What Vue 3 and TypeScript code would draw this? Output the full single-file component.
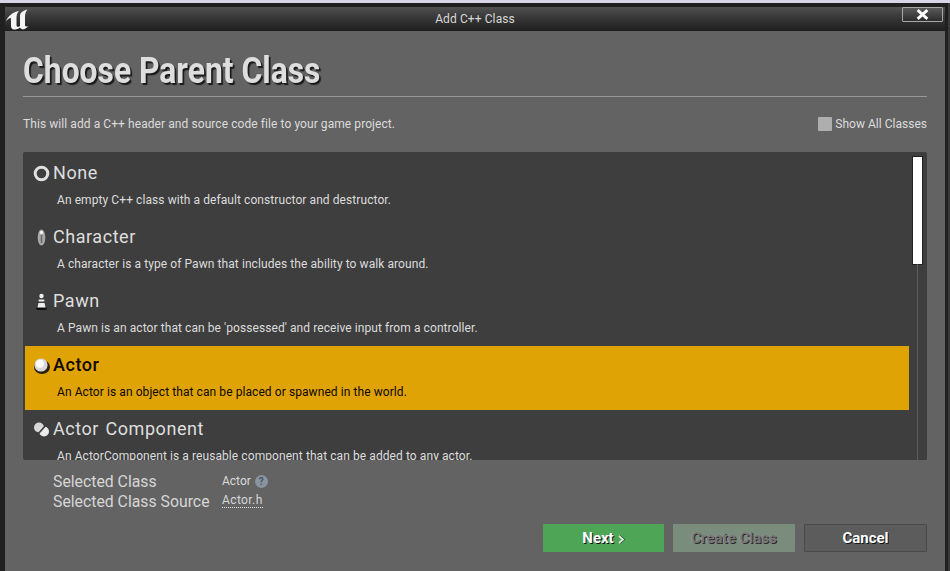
<script setup lang="ts">
interface ClassItem {
  name: string
  desc: string
  icon: string
  selected?: boolean
}

const items: ClassItem[] = [
  { name: 'None', desc: 'An empty C++ class with a default constructor and destructor.', icon: 'none' },
  { name: 'Character', desc: 'A character is a type of Pawn that includes the ability to walk around.', icon: 'character' },
  { name: 'Pawn', desc: "A Pawn is an actor that can be 'possessed' and receive input from a controller.", icon: 'pawn' },
  { name: 'Actor', desc: 'An Actor is an object that can be placed or spawned in the world.', icon: 'actor', selected: true },
  { name: 'Actor Component', desc: 'An ActorComponent is a reusable component that can be added to any actor.', icon: 'component' },
]
</script>

<template>
  <div class="window">
    <header class="titlebar">
      <svg class="logo" viewBox="0 0 26 24" width="26" height="24">
        <path fill="#f4f4f4" d="M1 14 C3 9 8 5 14 4 C12 6 11.500 8 11.500 11 L11.500 18 C11.500 20 13 20.500 15 19 L15 9 C15 6 17 4 22.500 2.500 C20.500 5 20 7 20 10 L20 18 C20 19.500 21.500 20 23.500 19 C22 21 20 22 18 22.500 C16.500 22 15.500 21.500 15 20.500 C13.500 22 11 22.500 9 22.500 C7 22.500 6 21 6 18.500 L6 12 C6 10 4 11 1 14 Z"/>
      </svg>
      <span class="window-title">Add C++ Class</span>
      <button class="close" type="button" aria-label="Close">
        <svg viewBox="0 0 12 10" width="13" height="11">
          <path d="M1.500 1 L10.500 9 M10.500 1 L1.500 9" stroke="#fff" stroke-width="2.600" fill="none"/>
        </svg>
      </button>
    </header>

    <main class="body">
      <div class="heading-wrap">
        <h1 class="heading">Choose Parent Class</h1>
      </div>
      <div class="rule"></div>

      <div class="intro">
        <span>This will add a C++ header and source code file to your game project.</span>
        <label class="show-all"><span class="check"></span>Show All Classes</label>
      </div>

      <section class="list">
        <div class="rows">
          <article v-for="item in items" :key="item.name" class="row" :class="{ selected: item.selected }">
            <div class="row-head">
              <span class="icon">
                <svg v-if="item.icon === 'none'" viewBox="0 0 17 17" width="17" height="17">
                  <circle cx="8.500" cy="8.500" r="6.300" fill="none" stroke="#e0e0e0" stroke-width="3"/>
                </svg>
                <svg v-else-if="item.icon === 'character'" viewBox="0 0 17 17" width="17" height="17">
                  <ellipse cx="8.500" cy="8.500" rx="3.800" ry="8" fill="#a8a8a8"/>
                  <circle cx="8.500" cy="3.500" r="1.700" fill="#f0f0f0"/>
                  <rect x="7.700" y="6" width="1.600" height="8" fill="#6a6a6a"/>
                </svg>
                <svg v-else-if="item.icon === 'pawn'" viewBox="0 0 17 17" width="17" height="17">
                  <ellipse cx="8.500" cy="15.500" rx="5.500" ry="1.500" fill="#0c0c0c"/>
                  <circle cx="8.500" cy="3" r="2.200" fill="#eee"/>
                  <rect x="5.500" y="6.500" width="6" height="2" rx="1" fill="#eee"/>
                  <path d="M4.500 14.500 L5.500 10 L11.500 10 L12.500 14.500 Z" fill="#eee"/>
                </svg>
                <svg v-else-if="item.icon === 'actor'" viewBox="0 0 17 17" width="17" height="17">
                  <ellipse cx="9" cy="10" rx="8" ry="7" fill="#2c2208"/>
                  <circle cx="8" cy="8" r="6.600" fill="#d8d8d8"/>
                  <circle cx="7" cy="6.800" r="4" fill="#fff"/>
                </svg>
                <svg v-else viewBox="0 0 17 17" width="17" height="17">
                  <circle cx="6" cy="6.500" r="5" fill="#d6d6d6"/>
                  <circle cx="11" cy="10.500" r="5" fill="#ececec"/>
                  <path d="M5 13 L13 4" stroke="#3e3e3e" stroke-width="1.800"/>
                </svg>
              </span>
              <h2 class="row-name">{{ item.name }}</h2>
            </div>
            <p class="row-desc">{{ item.desc }}</p>
          </article>
        </div>
        <div class="scroll"><div class="thumb"></div></div>
      </section>

      <dl class="details">
        <div class="detail">
          <dt>Selected Class</dt>
          <dd>Actor <span class="help">?</span></dd>
        </div>
        <div class="detail">
          <dt>Selected Class Source</dt>
          <dd><span class="link">Actor.h</span></dd>
        </div>
      </dl>

      <footer class="actions">
        <button class="btn next" type="button">Next<svg class="chev" viewBox="0 0 8 9" width="8" height="9"><path d="M2 1 L6 4.500 L2 8" fill="none" stroke="#d8e8d8" stroke-width="1.800"/></svg></button>
        <button class="btn create" type="button">Create Class</button>
        <button class="btn cancel" type="button">Cancel</button>
      </footer>
    </main>
  </div>
</template>

<style>
html, body { margin: 0; padding: 0; background: #d6d6e6; overflow: hidden; }
</style>

<style scoped>
* { box-sizing: border-box; }
.window {
  width: 948px;
  height: 568px;
  margin-top: 3px;
  background: #202020;
  border: solid #202020;
  border-width: 4px 3px 0 4px;
  box-shadow: 2px 0 0 #3a3a3a;
  display: flex;
  flex-direction: column;
  font-family: Roboto, "Liberation Sans", sans-serif;
  color: #e0e0e0;
}
.titlebar {
  height: 24px;
  flex: none;
  margin-left: 1px;
  padding-right: 16px;
  display: flex;
  align-items: center;
  justify-content: center;
  position: relative;
  background: linear-gradient(#525252, #3c3c3c 35%, #1e1e1e);
}
.logo { position: absolute; left: 0; top: 0; }
.window-title { font-size: 12px; color: #d8d8d8; margin-left: 16px; letter-spacing: 0.1px; }
.close {
  position: absolute;
  right: 2px;
  top: 0;
  width: 41px;
  height: 15px;
  padding: 0;
  display: flex;
  align-items: center;
  justify-content: center;
  border: 1px solid #a8a8a8;
  border-radius: 1px;
  background: linear-gradient(#5a5a5a, #2c2c2c);
}
.body {
  flex: 1;
  min-height: 0;
  margin: 0 0 0 1px;
  padding: 0 18px;
  background: #636363;
  display: flex;
  flex-direction: column;
}
.heading-wrap { height: 65px; padding-bottom: 3px; display: flex; align-items: flex-end; flex: none; }
.heading {
  margin: 0;
  font-size: 37px;
  line-height: 44px;
  font-weight: 700;
  color: #dedede;
  white-space: nowrap;
  transform: scaleX(0.86);
  transform-origin: left center;
  text-shadow: 2px 2px 1px #1a1a1a;
}
.rule { height: 1px; background: #989898; flex: none; }
.intro {
  height: 55px;
  flex: none;
  padding-bottom: 2px;
  display: flex;
  justify-content: space-between;
  align-items: center;
  font-size: 12px;
  color: #dcdcdc;
  letter-spacing: 0.075px;
}
.show-all { display: flex; align-items: center; gap: 3px; letter-spacing: 0.02px; }
.check { width: 14px; height: 14px; border-radius: 1px; background: #aeaeae; }
.list {
  height: 308px;
  flex: none;
  background: #3e3e3e;
  border-radius: 2px;
  display: flex;
  padding: 2px 0 0 2px;
  overflow: hidden;
}
.rows { flex: 1; min-width: 0; }
.row { height: 64px; padding: 7px 0 0 0; color: #e6e6e6; }
.row.selected { background: #dfa306; color: #0a0500; }
.row.selected .row-name { font-weight: 500; color: #120800; }
.row-head { display: flex; align-items: center; height: 24px; }
.icon { width: 28px; height: 24px; display: flex; align-items: center; justify-content: center; padding-left: 4px; flex: none; }
.row-name { margin: 0; font-size: 18px; font-weight: 400; line-height: 24px; letter-spacing: 0.55px; word-spacing: 1.5px; color: #dedede; }
.row-desc { margin: 7px 0 0 32px; font-size: 12px; line-height: 16px; letter-spacing: 0.08px; color: #dcdcdc; white-space: nowrap; }
.row.selected .row-desc { color: #0e0700; }
.scroll {
  width: 18px;
  flex: none;
  padding: 3px 5px 0 4px;
  position: relative;
  background: #3e3e3e;
}
.scroll::after {
  content: "";
  position: absolute;
  left: 8px;
  top: 110px;
  bottom: 0;
  width: 1px;
  background: #5c5c5c;
}
.thumb { width: 9px; height: 107px; background: #fff; box-shadow: 0 0 0 1px #222; }
.details { margin: 11px 0 0 30px; flex: none; }
.detail { display: flex; height: 20px; align-items: center; }
dt { width: 169px; font-size: 15.8px; color: #d6d6d6; }
dd { margin: 0; font-size: 12px; color: #d8d8d8; display: flex; align-items: center; gap: 4px; }
.help {
  width: 13px;
  height: 13px;
  border-radius: 50%;
  background: #8a93a0;
  color: #4c5560;
  font-size: 10px;
  font-weight: 700;
  display: inline-flex;
  align-items: center;
  justify-content: center;
}
.link { border-bottom: 1px dotted #e4e4e4; line-height: 13px; letter-spacing: 0.4px; }
.actions { margin-top: 13px; display: flex; justify-content: flex-end; gap: 9px; flex: none; }
.btn {
  width: 122px;
  height: 28px;
  padding: 0;
  border: 1px solid transparent;
  border-radius: 1px;
  font-family: Roboto, "Liberation Sans", sans-serif;
  font-size: 15px;
  font-weight: 700;
  color: #fff;
  text-shadow: 1px 1px 0 #111;
}
.next { width: 121px; background: #4ea556; }
.chev { margin-left: 3px; vertical-align: -1px; filter: drop-shadow(1px 0 0 #2a4a2c); }
.create { background: #7a8c7b; color: #777; text-shadow: 1px 1px 0 #2a2a2a, -1px 0 0 #999; }
.cancel { width: 123px; background: #5c5c5c; border-color: #4a4a4a; }
</style>
